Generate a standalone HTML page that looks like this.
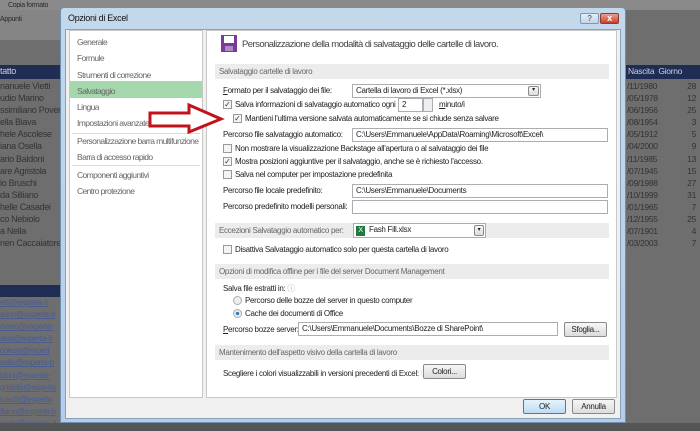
<!DOCTYPE html>
<html><head><meta charset="utf-8">
<style>
*{margin:0;padding:0;box-sizing:border-box}
body{width:700px;height:431px;overflow:hidden;background:#6e6e6e;font-family:"Liberation Sans",sans-serif;font-size:8px;letter-spacing:-0.3px;color:#222;position:relative}
.a{position:absolute;white-space:nowrap}
.bgt{color:#2a2a2a;font-size:9px}
.m{color:#666;font-size:8.5px;letter-spacing:-0.6px}
.cb{position:absolute;width:9px;height:9px;border:1px solid #999;background:#f4f4f4;font-size:8px;line-height:7px;text-align:center;color:#333;letter-spacing:0}
.inp{position:absolute;height:14px;border:1px solid #abadb3;background:#fff;font-size:8px;padding-left:3px;line-height:12px}
.sec{position:absolute;left:215px;width:394px;background:#ececec;color:#666;font-size:8px;padding-left:4px}
.btn{position:absolute;height:15px;border:1px solid #8a8a8a;border-radius:2px;background:linear-gradient(#f6f6f6,#dcdcdc);font-size:8px;text-align:center;line-height:13px}
.rd{position:absolute;width:9px;height:9px;border-radius:50%;border:1px solid #aaa;background:#eee}
</style></head><body>
<div class="a" style="left:0;top:0;width:700px;height:10px;background:#8a8a8a"></div>
<div class="a" style="left:0;top:10px;width:60px;height:30px;background:#858585"></div>
<div class="a bgt" style="left:8px;top:2px;font-size:7px">Copia formato</div>
<div class="a bgt" style="left:0;top:16px;font-size:7px">Appunti</div>
<div class="a" style="left:0;top:65px;width:62px;height:14px;background:#1f2d55"></div>
<div class="a" style="left:0;top:66px;color:#ccd;font-size:9px">tatto</div>
<div class="a" style="left:0;top:80px;line-height:12.1px;color:#333;font-size:9px">nanuele Vietti<br>udio Marino<br>ssimiliano Povero<br>ella Biava<br>hele Ascolese<br>iana Osella<br>ario Baldoni<br>are Agristola<br>io Bruschi<br>da Silliano<br>helle Casadei<br>co Nebiolo<br>a Nella<br>nen Caccaiatore</div>
<div class="a" style="left:0;top:285px;width:62px;height:12px;background:#1f2d55"></div>
<div class="a" style="left:0;top:297px;line-height:12.1px;color:#4a5c90;font-size:8px;text-decoration:underline">etti@experta-b<br>arino@experta-b<br>overo@experta-<br>iava@experta-b<br>colese@expert<br>sella@experta-b<br>ldoni@experta-<br>gristola@experta<br>ruschi@experta<br>illano@experta-b<br>sadei@experta-it</div>
<div class="a" style="left:624px;top:65px;width:76px;height:14px;background:#1f2d55"></div>
<div class="a" style="left:628px;top:66px;color:#ccd;font-size:8.5px">Nascita &nbsp;Giorno</div>
<div class="a" style="left:627px;top:80px;line-height:12.1px;color:#333;font-size:8.5px">/11/1980<br>/05/1978<br>/06/1956<br>/08/1954<br>/05/1912<br>/04/2000<br>/11/1985<br>/07/1945<br>/09/1988<br>/10/1999<br>/01/1965<br>/12/1955<br>/07/1901<br>/03/2003</div>
<div class="a" style="left:680px;top:80px;line-height:12.1px;color:#333;font-size:8.5px;text-align:right;width:16px">28<br>12<br>25<br>3<br>5<br>9<br>13<br>15<br>27<br>31<br>7<br>25<br>4<br>7</div>
<div class="a" style="left:0;top:423px;width:700px;height:8px;background:#555"></div>
<div class="a" style="left:60px;top:7px;width:566px;height:416px;background:linear-gradient(#c4d8ec,#b5cde6);border:1px solid #6f8fb0;border-radius:4px 4px 0 0"></div>
<div class="a" style="left:68px;top:13px;font-size:9px;color:#111">Opzioni di Excel</div>
<div class="a" style="left:580px;top:13px;width:19px;height:11px;border:1px solid #7c97b5;border-radius:2px;background:linear-gradient(#e4eef8,#c3d5ea);font-size:8px;text-align:center;line-height:9px;color:#345">?</div>
<div class="a" style="left:600px;top:13px;width:19px;height:11px;border:1px solid #8c3a30;border-radius:2px;background:linear-gradient(#e8a090,#c8412d);font-size:9px;text-align:center;line-height:9px;color:#fff;font-weight:bold">x</div>
<div class="a" style="left:65px;top:29px;width:556px;height:390px;background:#f0f0f0;border:1px solid #8aa0b8"></div>
<div class="a" style="left:69px;top:30px;width:134px;height:368px;background:#fff;border:1px solid #c8c8c8"></div>
<div class="a" style="left:70px;top:81px;width:132px;height:17px;background:#a4d8ac"></div>
<div class="a m" style="left:77px;top:34px;line-height:16.3px">Generale<br>Formule<br>Strumenti di correzione<br>Salvataggio<br>Lingua<br>Impostazioni avanzate</div>
<div class="a" style="left:72px;top:133px;width:128px;height:1px;background:#ddd"></div>
<div class="a m" style="left:77px;top:133px;line-height:16.3px">Personalizzazione barra multifunzione<br>Barra di accesso rapido</div>
<div class="a" style="left:72px;top:165px;width:128px;height:1px;background:#ddd"></div>
<div class="a m" style="left:77px;top:167px;line-height:16.3px">Componenti aggiuntivi<br>Centro protezione</div>
<div class="a" style="left:206px;top:30px;width:411px;height:368px;background:#fff;border:1px solid #c8c8c8"></div>
<svg class="a" style="left:221px;top:35px" width="16" height="17" viewBox="0 0 16 17"><rect x="0" y="0" width="16" height="17" fill="#7a3a9a"/><rect x="3" y="1" width="10" height="7" fill="#fff"/><rect x="4" y="11" width="8" height="5" fill="#b08cc4"/></svg>
<div class="a" style="left:242px;top:39px;font-size:9.5px;letter-spacing:-0.55px;color:#444">Personalizzazione della modalità di salvataggio delle cartelle di lavoro.</div>
<div class="sec" style="top:64px;height:15px;line-height:15px">Salvataggio cartelle di lavoro</div>
<div class="a" style="left:223px;top:86px"><u>F</u>ormato per il salvataggio dei file:</div>
<div class="inp" style="left:352px;top:84px;width:189px">Cartella di lavoro di Excel (*.xlsx)</div>
<div class="btn" style="left:528px;top:86px;width:11px;height:10px;line-height:6px;font-size:6px">▾</div>
<div class="cb" style="left:223px;top:100px">✓</div>
<div class="a" style="left:235px;top:100px">Salva informazioni di salvataggio automatico ogni</div>
<div class="inp" style="left:398px;top:98px;width:25px">2</div>
<div class="a" style="left:423px;top:98px;width:10px;height:14px;border:1px solid #abadb3;background:#eee"></div>
<div class="a" style="left:439px;top:100px"><u>m</u>inuto/i</div>
<div class="cb" style="left:233px;top:114px">✓</div>
<div class="a" style="left:245px;top:114px">Mantieni l'ultima versione salvata automaticamente se si chiude senza salvare</div>
<div class="a" style="left:223px;top:130px">Percorso file salvataggio automatico:</div>
<div class="inp" style="left:352px;top:128px;width:256px">C:\Users\Emmanuele\AppData\Roaming\Microsoft\Excel\</div>
<div class="cb" style="left:223px;top:144px"></div>
<div class="a" style="left:235px;top:144px">Non mostrare la visualizzazione Backstage all'apertura o al salvataggio dei file</div>
<div class="cb" style="left:223px;top:157px">✓</div>
<div class="a" style="left:235px;top:157px">Mostra posizioni aggiuntive per il salvataggio, anche se è richiesto l'accesso.</div>
<div class="cb" style="left:223px;top:170px"></div>
<div class="a" style="left:235px;top:170px">Salva nel computer per impostazione predefinita</div>
<div class="a" style="left:223px;top:186px">Percorso file locale predefinito:</div>
<div class="inp" style="left:352px;top:184px;width:256px">C:\Users\Emmanuele\Documents</div>
<div class="a" style="left:223px;top:202px">Percorso predefinito modelli personali:</div>
<div class="inp" style="left:352px;top:200px;width:256px"></div>
<div class="sec" style="top:223px;height:15px;line-height:15px">Eccezioni Salvataggio automatico per:</div>
<div class="inp" style="left:353px;top:223px;width:133px;height:15px;padding-left:15px">Fash Fill.xlsx</div>
<div class="a" style="left:356px;top:226px;width:9px;height:10px;background:#1f7a3f;color:#fff;font-size:7px;text-align:center;line-height:10px">X</div>
<div class="btn" style="left:474px;top:225px;width:10px;height:11px;line-height:8px;font-size:6px">▾</div>
<div class="cb" style="left:223px;top:245px"></div>
<div class="a" style="left:235px;top:245px">Disattiva Salvataggio automatico solo per questa cartella di lavoro</div>
<div class="sec" style="top:264px;height:15px;line-height:15px">Opzioni di modifica offline per i file del server Document Management</div>
<div class="a" style="left:223px;top:283px">Salva file estratti in: <span style="color:#aaa">ⓘ</span></div>
<div class="rd" style="left:233px;top:296px"></div>
<div class="a" style="left:245px;top:296px">Percorso delle bozze del server in questo computer</div>
<div class="rd" style="left:233px;top:309px;background:radial-gradient(#3a7ab8 30%,#eee 40%)"></div>
<div class="a" style="left:245px;top:309px">Cache dei documenti di Office</div>
<div class="a" style="left:223px;top:325px"><u>P</u>ercorso bozze server:</div>
<div class="inp" style="left:298px;top:322px;width:260px">C:\Users\Emmanuele\Documents\Bozze di SharePoint\</div>
<div class="btn" style="left:564px;top:322px;width:43px">Sfoglia...</div>
<div class="sec" style="top:345px;height:15px;line-height:15px">Mantenimento dell'aspetto visivo della cartella di lavoro</div>
<div class="a" style="left:223px;top:368px">Scegliere i colori visualizzabili in versioni precedenti di Excel: <span style="color:#aaa">ⓘ</span></div>
<div class="btn" style="left:423px;top:364px;width:43px">Colori...</div>
<div class="btn" style="left:523px;top:399px;width:43px;background:linear-gradient(#e6f3fc,#bcdcf4);border-color:#3c7fb1">OK</div>
<div class="btn" style="left:572px;top:399px;width:43px">Annulla</div>
<svg class="a" style="left:145px;top:102px" width="82" height="32" viewBox="0 0 82 32"><path d="M5 11 H44 V3 L76 17 L44 30 V24 H5 Z" fill="#fff" stroke="#c0141c" stroke-width="3" stroke-linejoin="miter"/></svg>
</body></html>
